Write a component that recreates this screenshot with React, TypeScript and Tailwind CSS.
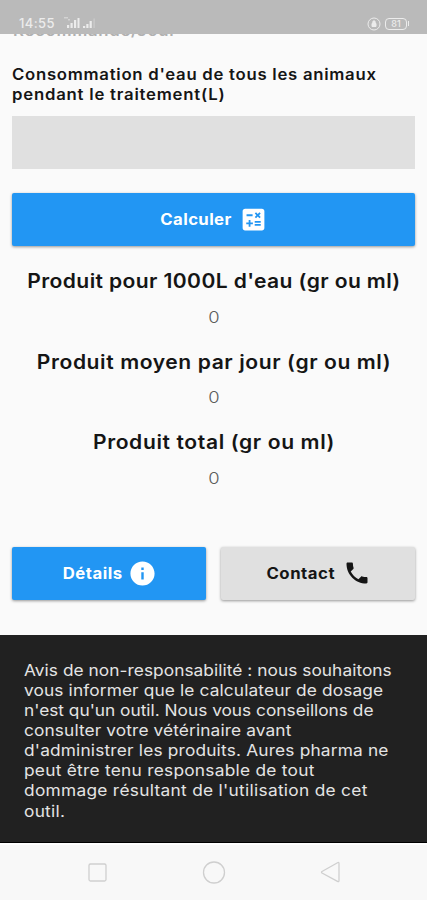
import { MdCalculate, MdInfo, MdPhone } from "react-icons/md";

const results = [
  { label: "Produit pour 1000L d'eau (gr ou ml)", value: 0, tracking: "tracking-[0.36px]" },
  { label: "Produit moyen par jour (gr ou ml)", value: 0, tracking: "tracking-[0.55px]" },
  { label: "Produit total (gr ou ml)", value: 0, tracking: "tracking-[0.57px]" },
];

const disclaimer = [
  { text: "Avis de non-responsabilité : nous souhaitons", tracking: "tracking-[0.05px]" },
  { text: "vous informer que le calculateur de dosage", tracking: "tracking-[0.12px]" },
  { text: "n'est qu'un outil. Nous vous conseillons de", tracking: "tracking-normal" },
  { text: "consulter votre vétérinaire avant", tracking: "tracking-[0.11px]" },
  { text: "d'administrer les produits. Aures pharma ne", tracking: "tracking-[0.17px]" },
  { text: "peut être tenu responsable de tout", tracking: "tracking-[0.25px]" },
  { text: "dommage résultant de l'utilisation de cet", tracking: "tracking-[0.28px]" },
  { text: "outil.", tracking: "tracking-[0.25px]" },
];

function StatusBar() {
  return (
    <div className="flex h-[33.5px] shrink-0 items-end justify-between bg-[#bababa] pr-[18px] pb-[3px] pl-[19px] text-[#ececec]">
      <div className="flex items-end">
        <span className="text-[13px] leading-[15px] font-medium tracking-[0.4px]">14:55</span>
        <svg className="mb-[2px] ml-[9px]" width="34" height="12" viewBox="0 0 34 12">
          <g fill="currentColor">
            <path d="M0 0h4v1.500H0zM4 2h2v1.500H4z" opacity=".5" />
            <path d="M3 8h2.200v3H3zM6.500 6h2.200v5H6.500zM10 3h2.200v8H10zM13.500 1h2v10h-2z" />
            <path d="M19 9h2.200v2H19zM22.300 7h2.200v4h-2.200zM25.600 4h2.200v7h-2.200z" />
            <path d="M29.500 1.500h1.200v9.500h-1.200z" opacity=".4" />
          </g>
        </svg>
      </div>
      <div className="flex items-center gap-[4px]">
        <svg width="14" height="14" viewBox="0 0 14 14" fill="none" stroke="currentColor">
          <circle cx="7" cy="7" r="6" />
          <path d="M5 6.500h4v3H5zM5.800 6.500V5a1.200 1.200 0 0 1 2.400 0v1.500" fill="currentColor" />
        </svg>
        <div className="flex items-center gap-px">
          <div className="flex h-[12px] w-[22px] items-center justify-center rounded-[4px] border border-current text-[9px] leading-none font-medium">
            81
          </div>
          <div className="h-[5px] w-px bg-current" />
        </div>
      </div>
    </div>
  );
}

function NavBar() {
  return (
    <div className="flex flex-1 items-start border-t-2 border-white bg-[#f8f8f8]">
      <svg width="427" height="55" viewBox="0 0 427 55" fill="none" stroke="#cfcfcf" strokeWidth="1.300">
        <rect x="89" y="19" width="17" height="17" rx="1.500" />
        <circle cx="214" cy="27.500" r="10.500" />
        <path d="M322 26.500 337.500 17.700q1.500-.8 1.500.8v17q0 1.800-1.500.9L322 28q-1-.75 0-1.500z" />
      </svg>
    </div>
  );
}

export default function App() {
  return (
    <div className="flex h-[900px] w-[427px] flex-col overflow-hidden bg-[#fafafa] font-['Inter',sans-serif] text-[#151515]">
      <StatusBar />

      {/* heading scrolled under the status bar */}
      <div className="flex h-[7px] shrink-0 items-end overflow-hidden pl-[12.5px] text-[15.5px] leading-[20px] font-semibold whitespace-nowrap text-[#b0b0b0]">
        <p className="origin-left scale-x-108 tracking-[0.66px]">Recommandé/Jour</p>
      </div>

      <div className="mt-[24px] shrink-0 px-[12px] text-[15.5px] leading-[20px] font-semibold whitespace-nowrap">
        <p className="origin-left scale-x-108 tracking-[0.67px]">Consommation d'eau de tous les animaux</p>
        <p className="origin-left scale-x-108 tracking-[0.72px]">pendant le traitement(L)</p>
        <div className="mt-[11px] h-[53px] bg-[#e0e0e0]" />
      </div>

      <button className="mx-[12px] mt-[24px] flex h-[53px] shrink-0 items-center justify-center gap-[9.5px] rounded-[2px] bg-[#2296f3] pl-[4px] text-[15.5px] font-bold text-white shadow-[0_1px_3px_rgba(0,0,0,0.4)]">
        <span className="pt-px scale-x-108 tracking-[0.35px]">Calculer</span>
        <MdCalculate size={29} />
      </button>

      <div className="mt-[20.5px] flex shrink-0 flex-col pl-px text-center">
        {results.map((result) => (
          <div key={result.label} className="h-[80.5px]">
            <p
              className={`scale-x-108 text-[19.5px] leading-[30px] font-semibold whitespace-nowrap ${result.tracking}`}
            >
              {result.label}
            </p>
            <p className="mt-[9.5px] scale-x-115 text-[16px] leading-[22px] font-light text-[#5c5c5c]">{result.value}</p>
          </div>
        ))}
      </div>

      <div className="mt-[39px] flex shrink-0 gap-[15px] px-[12px] text-[15.5px] font-bold">
        <button className="flex h-[53.5px] w-[194px] items-center justify-center gap-[8.5px] rounded-[2px] bg-[#2296f3] pl-[4px] text-white shadow-[0_1px_3px_rgba(0,0,0,0.4)]">
          <span className="scale-x-108 tracking-[0.43px]">Détails</span>
          <MdInfo size={29} />
        </button>
        <button className="flex h-[53.5px] flex-1 items-center justify-center gap-[10px] rounded-[2px] bg-[#e0e0e0] pl-[4px] shadow-[0_1px_3px_rgba(0,0,0,0.4)]">
          <span className="scale-x-108 tracking-[0.48px]">Contact</span>
          <MdPhone size={28} />
        </button>
      </div>

      <div className="mt-[35px] h-[207.5px] shrink-0 border-b border-black bg-[#212121] px-[24px] pt-[24.5px] text-[16px] leading-[20.15px] whitespace-nowrap text-[#e4e4e4]">
        {disclaimer.map((line) => (
          <p key={line.text} className={`origin-left scale-x-108 ${line.tracking}`}>
            {line.text}
          </p>
        ))}
      </div>

      <NavBar />
    </div>
  );
}
